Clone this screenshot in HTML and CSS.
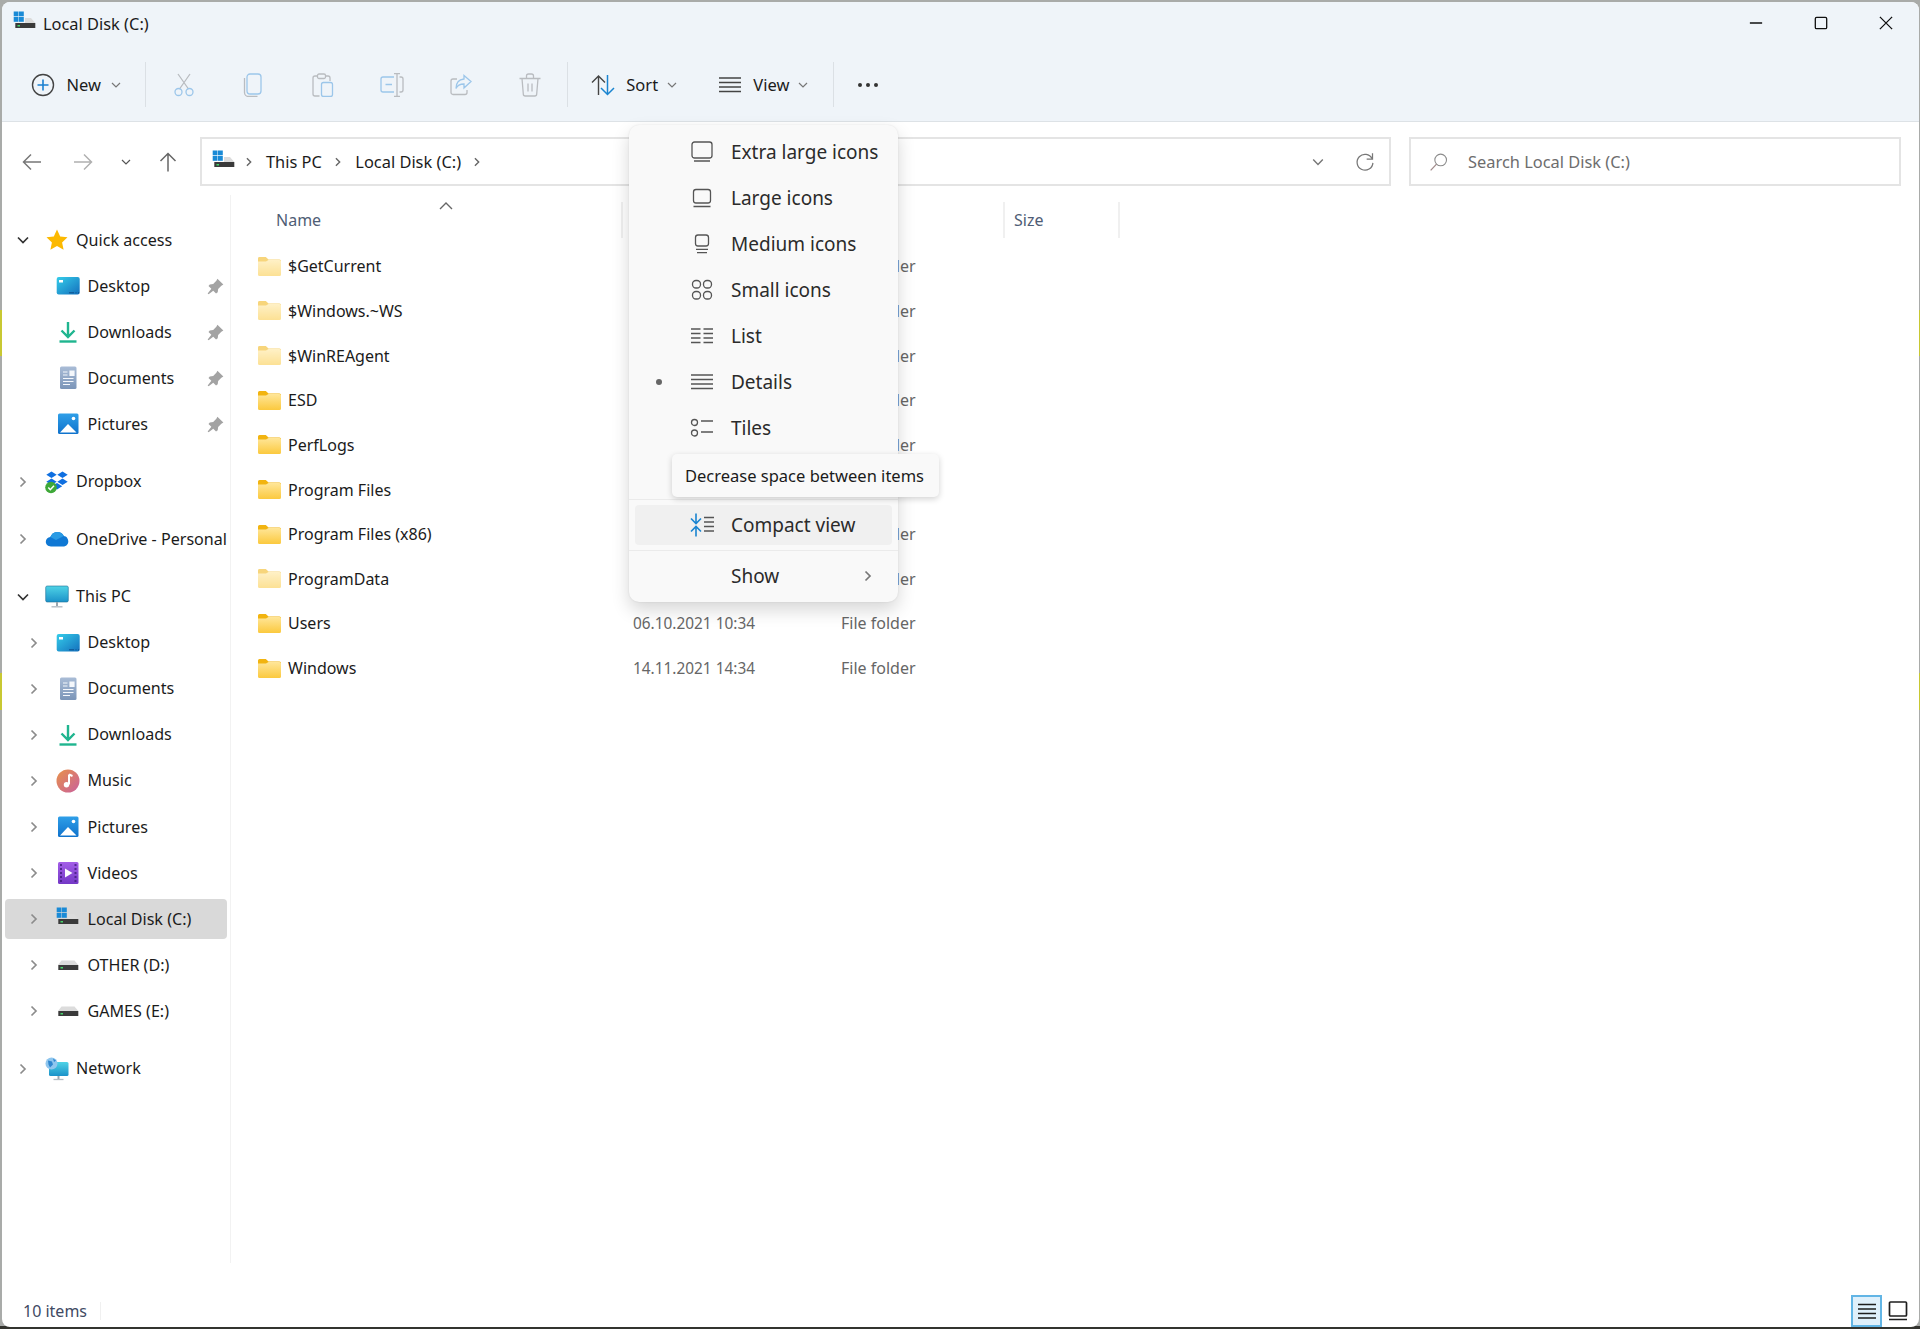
FILE: index.html
```html
<!DOCTYPE html>
<html lang="en">
<head>
  <meta charset="UTF-8">
  <title>Local Disk (C:)</title>
  <link rel="stylesheet" href="styles.css">
</head>
<body>
  <svg class="sprite" xmlns="http://www.w3.org/2000/svg">
    <defs>
      <linearGradient id="g-desk" x1="0" y1="0" x2="1" y2="1"><stop offset="0" stop-color="#35cdea"/><stop offset="1" stop-color="#1470bd"/></linearGradient>
      <linearGradient id="g-doc" x1="0" y1="0" x2="0" y2="1"><stop offset="0" stop-color="#a9bcd6"/><stop offset="1" stop-color="#7b95b8"/></linearGradient>
      <linearGradient id="g-pic" x1="0" y1="0" x2="0" y2="1"><stop offset="0" stop-color="#2f9fe8"/><stop offset="1" stop-color="#0f72cc"/></linearGradient>
      <linearGradient id="g-music" x1="0" y1="0" x2="1" y2="1"><stop offset="0" stop-color="#e8924a"/><stop offset="1" stop-color="#c9609c"/></linearGradient>
      <linearGradient id="g-video" x1="0" y1="0" x2="0" y2="1"><stop offset="0" stop-color="#a35ee8"/><stop offset="1" stop-color="#7438c6"/></linearGradient>
      <linearGradient id="g-mon" x1="0" y1="0" x2="0" y2="1"><stop offset="0" stop-color="#4fd3e6"/><stop offset="1" stop-color="#1b92c9"/></linearGradient>
      <linearGradient id="g-folder" x1="0" y1="0" x2="0" y2="1"><stop offset="0" stop-color="#ffe699"/><stop offset="1" stop-color="#fbc93e"/></linearGradient>
    </defs>
    <symbol id="i-chev-r" viewBox="0 0 12 12"><path d="M3.5 1.500 8 6l-4.500 4.500" fill="none" stroke="currentColor" stroke-width="1.700"/></symbol>
    <symbol id="i-chev-d" viewBox="0 0 12 12"><path d="M1 3.500 6 8.500l5-5" fill="none" stroke="currentColor" stroke-width="1.700"/></symbol>
    <symbol id="i-chev-s" viewBox="0 0 10 10"><path d="M1 3l4 4 4-4" fill="none" stroke="currentColor" stroke-width="1.200"/></symbol>
    <symbol id="i-star" viewBox="0 0 24 24"><path d="M12 1.500l3.200 6.900 7.300.9-5.400 5.100 1.500 7.400L12 18.100l-6.600 3.700 1.500-7.400L1.500 9.300l7.300-.9z" fill="#fcb900"/></symbol>
    <symbol id="i-desktop" viewBox="0 0 24 24"><rect x=".7" y="3" width="23" height="17.500" rx="2" fill="url(#g-desk)"/><rect x="3" y="6" width="4" height="2.500" fill="#fff"/><path d="M13 18.800h5M19.500 18.800h1M22 18.800h1" stroke="#0d4f8c" stroke-width="1"/></symbol>
    <symbol id="i-down" viewBox="0 0 24 24"><path d="M12 2v15M5.500 10.500 12 17l6.500-6.500" fill="none" stroke="#1fb58f" stroke-width="2.400"/><path d="M3.500 21.500h17" stroke="#1fb58f" stroke-width="2.400"/></symbol>
    <symbol id="i-doc" viewBox="0 0 24 24"><rect x="4" y=".5" width="16.500" height="22.500" rx="1.500" fill="url(#g-doc)"/><path d="M7 6h4.500M7 9h4.500M14 5h4v4.500h-4z M7 12.500h10.500M7 15.500h10.500M7 18.500h7" stroke="#f4f7fb" stroke-width="1.200" fill="#f4f7fb"/></symbol>
    <symbol id="i-pic" viewBox="0 0 24 24"><rect x="2" y="1.500" width="20.500" height="20.500" rx="1.500" fill="url(#g-pic)"/><circle cx="17.500" cy="6.500" r="1.800" fill="#fff"/><path d="M4 20.500l8-8.500 8.500 8.500z" fill="#fff"/></symbol>
    <symbol id="i-pin" viewBox="0 0 16 16"><path d="M9.800.6 15.400 6.200l-1.900 1.100-3 3-.4 3.200-1.600 1.200-2.600-2.800L1.500 15.400.6 14.500l3.500-4.300L1.400 7.500l1.200-1.500 3.200-.4 3-3z" fill="#a3a3a3"/></symbol>
    <symbol id="i-music" viewBox="0 0 24 24"><circle cx="12" cy="12" r="11.500" fill="url(#g-music)"/><path d="M13 5.500v10" stroke="#fff" stroke-width="2"/><path d="M13 5.500l3.500 1.500" stroke="#fff" stroke-width="2"/><circle cx="10.500" cy="15.700" r="2.700" fill="#fff"/></symbol>
    <symbol id="i-video" viewBox="0 0 24 24"><rect x="2" y="1" width="20.500" height="22" rx="1.500" fill="url(#g-video)"/><path d="M9 7.500v9l7.500-4.500z" fill="#fff"/><path d="M4 4h2M4 8h2M4 12h2M4 16h2M4 20h2M18.500 4h2M18.500 8h2M18.500 12h2M18.500 16h2M18.500 20h2" stroke="#3d1a78" stroke-width="1.600"/></symbol>
    <symbol id="i-drive-c" viewBox="0 0 24 24"><g fill="#1a8ad6"><rect x=".7" y=".5" width="4.800" height="4.800"/><rect x="6" y=".5" width="4.800" height="4.800"/><rect x=".7" y="6" width="4.800" height="4.800"/><rect x="6" y="6" width="4.800" height="4.800"/></g><path d="M12 7h6l4.300 5H12z" fill="#dcdcdc"/><rect x="2.300" y="12" width="20" height="5" fill="#3a3a3a"/><rect x="4.500" y="14" width="2.500" height="1.500" fill="#45d66a"/></symbol>
    <symbol id="i-drive" viewBox="0 0 24 24"><path d="M5.500 7.500h13l3.800 4.500H2z" fill="#dcdcdc"/><rect x="2.300" y="12" width="20" height="5" fill="#3a3a3a"/><rect x="4.500" y="14" width="2.500" height="1.500" fill="#45d66a"/></symbol>
    <symbol id="i-dropbox" viewBox="0 0 24 24"><g fill="#0f6fe0"><path d="M6.500 1.500l5.200 3.300-5.200 3.300L1.300 4.800z"/><path d="M17.500 1.500l5.200 3.300-5.200 3.300-5.200-3.300z"/><path d="M6.500 8.500l5.200 3.300-5.200 3.300-5.200-3.300z"/><path d="M17.500 8.500l5.200 3.300-5.200 3.300-5.200-3.300z"/><path d="M12 13l5.200 3.300L12 19.600l-5.200-3.300z"/></g><circle cx="6" cy="17.500" r="5.800" fill="#3ea838"/><path d="M3.300 17.500l2 2.200 3.700-4" fill="none" stroke="#fff" stroke-width="1.500"/></symbol>
    <symbol id="i-cloud" viewBox="0 0 24 24"><path d="M6 19.500C3 19.500.8 17.400.8 14.800c0-2.500 2-4.600 4.500-4.700C6.500 6.900 9.300 5 12.500 5c2.800 0 5.200 1.500 6.300 3.900 2.800.2 4.500 2.800 4.500 5.600 0 2.800-2.200 5-5 5z" fill="#0f78d4"/><path d="M5.300 10.100C6.500 6.900 9.300 5 12.500 5c2.800 0 5.200 1.500 6.300 3.900L11 13z" fill="#2a9be4"/></symbol>
    <symbol id="i-pc" viewBox="0 0 24 24"><rect x=".7" y="1" width="22.600" height="16" rx="1.500" fill="url(#g-mon)" stroke="#1c6f96" stroke-width=".6"/><path d="M12 17v4" stroke="#9aa6ae" stroke-width="2"/><path d="M6.500 21.800h11" stroke="#b4bdc4" stroke-width="1.400"/></symbol>
    <symbol id="i-net" viewBox="0 0 24 24"><rect x="4" y="5" width="19.500" height="14" rx="1.500" fill="url(#g-mon)"/><path d="M13.500 19v3" stroke="#9aa6ae" stroke-width="2"/><path d="M8.500 22.500h10" stroke="#b4bdc4" stroke-width="1.300"/><circle cx="6.500" cy="6.500" r="6" fill="#8fc6ee"/><path d="M3 3.500l4 1 1 3-3 3-1.500-3zM8 1.500l3 2-2 1.500z" fill="#2f86cf"/></symbol>
    <symbol id="i-folder" viewBox="0 0 23 19"><path d="M1.500 0h6.300l2.700 2.500h11a1.500 1.500 0 0 1 1.500 1.500v5H0V1.500A1.500 1.500 0 0 1 1.500 0z" fill="#f2b410"/><path d="M0 4.500h8l2.500-1.500H21.500A1.500 1.500 0 0 1 23 4.500v13a1.500 1.500 0 0 1-1.500 1.500h-20A1.500 1.500 0 0 1 0 17.500z" fill="url(#g-folder)"/></symbol>
    <symbol id="i-m-xl" viewBox="0 0 24 24"><rect x="2" y="2" width="20" height="16" rx="2.500" fill="none" stroke="currentColor" stroke-width="1.300"/><path d="M4 21h16" stroke="currentColor" stroke-width="1.300"/></symbol>
    <symbol id="i-m-l" viewBox="0 0 24 24"><rect x="3.500" y="3.500" width="17" height="13.500" rx="2.500" fill="none" stroke="currentColor" stroke-width="1.300"/><path d="M3.500 20.500h17" stroke="currentColor" stroke-width="1.300"/></symbol>
    <symbol id="i-m-m" viewBox="0 0 24 24"><rect x="5.500" y="3" width="13" height="11" rx="2.500" fill="none" stroke="currentColor" stroke-width="1.300"/><path d="M6 17.300h12M7 20.700h10" stroke="currentColor" stroke-width="1.300"/></symbol>
    <symbol id="i-m-s" viewBox="0 0 24 24"><g fill="none" stroke="currentColor" stroke-width="1.300"><rect x="2.500" y="2.500" width="8" height="7.500" rx="3.500"/><rect x="13.500" y="2.500" width="8" height="7.500" rx="3.500"/><rect x="2.500" y="13.500" width="8" height="7.500" rx="3.500"/><rect x="13.500" y="13.500" width="8" height="7.500" rx="3.500"/></g></symbol>
    <symbol id="i-m-list" viewBox="0 0 24 24"><path d="M1 5h9.500M1 9.500h9.500M1 14h9.500M1 18.500h9.500M13.500 5H23M13.500 9.500H23M13.500 14H23M13.500 18.500H23" stroke="currentColor" stroke-width="1.300"/></symbol>
    <symbol id="i-m-det" viewBox="0 0 24 24"><path d="M1 5h22M1 9.500h22M1 14h22M1 18.500h22" stroke="currentColor" stroke-width="1.300"/></symbol>
    <symbol id="i-m-tile" viewBox="0 0 24 24"><g fill="none" stroke="currentColor" stroke-width="1.300"><rect x="1.500" y="3.500" width="6" height="6" rx="3"/><rect x="1.500" y="14" width="6" height="6" rx="3"/><path d="M11 5h12M11 16h12"/></g></symbol>
    <symbol id="i-m-comp" viewBox="0 0 24 24"><g fill="none" stroke="#1a84d0" stroke-width="1.600"><path d="M6 .5v10M1 5.500l5 5 5-5M6 23.500v-10M1 18.500l5-5 5 5"/></g><path d="M14 4.500h10M14 9h10M14 13.500h10M14 18h10" stroke="currentColor" stroke-width="1.300"/></symbol>
    <symbol id="i-t-det" viewBox="0 0 20 20"><path d="M1 3.500h18M1 8h18M1 12.500h18M1 17h18" stroke="#1e1e1e" stroke-width="1.700"/></symbol>
    <symbol id="i-t-tile" viewBox="0 0 20 20"><rect x="1.500" y="1" width="17" height="14" rx="1" fill="none" stroke="#1e1e1e" stroke-width="1.700"/><path d="M1 18.500h18" stroke="#1e1e1e" stroke-width="1.700"/></symbol>
    <symbol id="i-cut" viewBox="0 0 24 24"><g fill="none" stroke-width="1.300"><path d="M6 1l10.500 15M18 1 7.500 16" stroke="#b9bcc0"/><circle cx="6.500" cy="19" r="3.500" stroke="#9cc6ea"/><circle cx="17.500" cy="19" r="3.500" stroke="#9cc6ea"/></g></symbol>
    <symbol id="i-copy" viewBox="0 0 24 24"><g fill="none" stroke-width="1.300"><rect x="6" y="1" width="14" height="20" rx="3" stroke="#9cc6ea"/><path d="M3.500 5v14.500a4 4 0 0 0 4 4h9" stroke="#b9bcc0"/></g></symbol>
    <symbol id="i-paste" viewBox="0 0 24 24"><g fill="none" stroke-width="1.300"><path d="M9.500 23H5a2 2 0 0 1-2-2V5a2 2 0 0 1 2-2h2.500M15.500 3H18a2 2 0 0 1 2 2v3" stroke="#b9bcc0"/><rect x="7.500" y="1" width="8" height="4.500" rx="1.500" stroke="#b9bcc0"/><rect x="11.500" y="9.500" width="11" height="14" rx="2" stroke="#9cc6ea"/></g></symbol>
    <symbol id="i-rename" viewBox="0 0 24 24"><g fill="none" stroke-width="1.300"><path d="M14 4H3a2 2 0 0 0-2 2v11a2 2 0 0 0 2 2h11" stroke="#9cc6ea"/><path d="M5.500 11.500H12" stroke="#9cc6ea"/><path d="M17 0.500v23M14 0.500h6M14 23.500h6M19.500 4h1.500a2 2 0 0 1 2 2v11a2 2 0 0 1-2 2h-1.500" stroke="#b9bcc0"/></g></symbol>
    <symbol id="i-share" viewBox="0 0 24 24"><g fill="none" stroke-width="1.300"><path d="M18 17v2.500a2 2 0 0 1-2 2H4a2 2 0 0 1-2-2V8a2 2 0 0 1 2-2h4" stroke="#b9bcc0"/><path d="M15 2.500l7 6-7 6.500v-4C11 11 8.500 12 7 15.500 7 10 10 6.500 15 6z" stroke="#9cc6ea"/></g></symbol>
    <symbol id="i-del" viewBox="0 0 24 24"><g fill="none" stroke="#b9bcc0" stroke-width="1.300"><path d="M1.500 5.500h21M8.500 5.500V3a2 2 0 0 1 2-2h3a2 2 0 0 1 2 2v2.500M4 5.500l1.300 15.500a2 2 0 0 0 2 2h9.400a2 2 0 0 0 2-2L20 5.500M10 10.500v8M14 10.500v8"/></g></symbol>
    <symbol id="i-new" viewBox="0 0 24 24"><circle cx="12" cy="12" r="10.500" fill="none" stroke="#444" stroke-width="1.400"/><path d="M12 6.500v11M6.500 12h11" stroke="#1a7fd0" stroke-width="1.600"/></symbol>
    <symbol id="i-sort" viewBox="0 0 24 24"><path d="M7.500 22V3M1 9.500 7.500 3 14 9.500" fill="none" stroke="#444" stroke-width="1.400"/><path d="M16.500 2v19.500M10 15l6.500 6.500L23 15" fill="none" stroke="#1a84d0" stroke-width="1.500"/></symbol>
    <symbol id="i-arrow-l" viewBox="0 0 24 24"><path d="M21 12H3.500M11 4.500 3.500 12l7.500 7.500" fill="none" stroke="currentColor" stroke-width="1.500"/></symbol>
    <symbol id="i-arrow-r" viewBox="0 0 24 24"><path d="M3 12h17.500M13 4.500l7.500 7.500-7.500 7.500" fill="none" stroke="currentColor" stroke-width="1.500"/></symbol>
    <symbol id="i-arrow-u" viewBox="0 0 24 24"><path d="M12 21.500V3.500M4.500 11 12 3.500l7.500 7.500" fill="none" stroke="currentColor" stroke-width="1.500"/></symbol>
    <symbol id="i-refresh" viewBox="0 0 24 24"><path d="M20.500 8A9.500 9.500 0 1 0 21.500 13" fill="none" stroke="#777" stroke-width="1.500"/><path d="M21 1.500V8.500H14" fill="none" stroke="#777" stroke-width="1.500"/></symbol>
    <symbol id="i-search" viewBox="0 0 24 24"><circle cx="14" cy="9.500" r="7" fill="none" stroke="#8c8c8c" stroke-width="1.300"/><path d="M9 14.500 2 22" stroke="#a08a8a" stroke-width="1.500"/></symbol>
  </svg>

  <div class="window">
    <div class="titlebar">
      <svg class="title-icon"><use href="#i-drive-c"/></svg>
      <span class="title-text">Local Disk (C:)</span>
      <div class="win-controls">
        <svg class="win-btn" viewBox="0 0 16 16"><path d="M1 8h14" stroke="#111" stroke-width="1.500"/></svg>
        <svg class="win-btn" viewBox="0 0 16 16"><rect x="1.500" y="1.500" width="13" height="13" rx="1.500" fill="none" stroke="#111" stroke-width="1.500"/></svg>
        <svg class="win-btn" viewBox="0 0 16 16"><path d="M1 1l14 14M15 1 1 15" stroke="#111" stroke-width="1.500"/></svg>
      </div>
    </div>

    <div class="toolbar">
      <div class="tool-btn tool-new">
        <svg class="ic24"><use href="#i-new"/></svg>
        <span>New</span>
        <svg class="chev-s"><use href="#i-chev-s"/></svg>
      </div>
      <div class="tool-sep sep-first"></div>
      <div class="tool-icon"><svg class="ic24"><use href="#i-cut"/></svg></div>
      <div class="tool-icon"><svg class="ic24"><use href="#i-copy"/></svg></div>
      <div class="tool-icon"><svg class="ic24"><use href="#i-paste"/></svg></div>
      <div class="tool-icon"><svg class="ic24"><use href="#i-rename"/></svg></div>
      <div class="tool-icon"><svg class="ic24"><use href="#i-share"/></svg></div>
      <div class="tool-icon"><svg class="ic24"><use href="#i-del"/></svg></div>
      <div class="tool-sep sep-second"></div>
      <div class="tool-btn tool-sort">
        <svg class="ic24"><use href="#i-sort"/></svg>
        <span>Sort</span>
        <svg class="chev-s"><use href="#i-chev-s"/></svg>
      </div>
      <div class="tool-btn tool-view">
        <svg class="ic24 dark"><use href="#i-m-det"/></svg>
        <span>View</span>
        <svg class="chev-s"><use href="#i-chev-s"/></svg>
      </div>
      <div class="tool-sep sep-third"></div>
      <div class="tool-more"><i></i><i></i><i></i></div>
    </div>

    <div class="nav">
      <svg class="nav-btn nav-back"><use href="#i-arrow-l"/></svg>
      <svg class="nav-btn nav-fwd"><use href="#i-arrow-r"/></svg>
      <svg class="nav-hist"><use href="#i-chev-s"/></svg>
      <svg class="nav-btn nav-up"><use href="#i-arrow-u"/></svg>
      <div class="address">
        <svg class="ic24"><use href="#i-drive-c"/></svg>
        <svg class="crumb-chev"><use href="#i-chev-r"/></svg>
        <span>This PC</span>
        <svg class="crumb-chev"><use href="#i-chev-r"/></svg>
        <span>Local Disk (C:)</span>
        <svg class="crumb-chev"><use href="#i-chev-r"/></svg>
        <svg class="addr-drop"><use href="#i-chev-s"/></svg>
        <svg class="addr-refresh"><use href="#i-refresh"/></svg>
      </div>
      <div class="search">
        <svg class="ic24"><use href="#i-search"/></svg>
        <span>Search Local Disk (C:)</span>
      </div>
    </div>

    <div class="body">
      <aside class="sidebar">
        <div class="group">
          <div class="row"><svg class="chev open"><use href="#i-chev-d"/></svg><svg class="ic24"><use href="#i-star"/></svg><span>Quick access</span></div>
          <div class="row sub"><span class="chev"></span><svg class="ic24"><use href="#i-desktop"/></svg><span>Desktop</span><svg class="pin"><use href="#i-pin"/></svg></div>
          <div class="row sub"><span class="chev"></span><svg class="ic24"><use href="#i-down"/></svg><span>Downloads</span><svg class="pin"><use href="#i-pin"/></svg></div>
          <div class="row sub"><span class="chev"></span><svg class="ic24"><use href="#i-doc"/></svg><span>Documents</span><svg class="pin"><use href="#i-pin"/></svg></div>
          <div class="row sub"><span class="chev"></span><svg class="ic24"><use href="#i-pic"/></svg><span>Pictures</span><svg class="pin"><use href="#i-pin"/></svg></div>
        </div>
        <div class="group">
          <div class="row"><svg class="chev"><use href="#i-chev-r"/></svg><svg class="ic24"><use href="#i-dropbox"/></svg><span>Dropbox</span></div>
        </div>
        <div class="group">
          <div class="row"><svg class="chev"><use href="#i-chev-r"/></svg><svg class="ic24"><use href="#i-cloud"/></svg><span>OneDrive - Personal</span></div>
        </div>
        <div class="group">
          <div class="row"><svg class="chev open"><use href="#i-chev-d"/></svg><svg class="ic24"><use href="#i-pc"/></svg><span>This PC</span></div>
          <div class="row sub"><svg class="chev"><use href="#i-chev-r"/></svg><svg class="ic24"><use href="#i-desktop"/></svg><span>Desktop</span></div>
          <div class="row sub"><svg class="chev"><use href="#i-chev-r"/></svg><svg class="ic24"><use href="#i-doc"/></svg><span>Documents</span></div>
          <div class="row sub"><svg class="chev"><use href="#i-chev-r"/></svg><svg class="ic24"><use href="#i-down"/></svg><span>Downloads</span></div>
          <div class="row sub"><svg class="chev"><use href="#i-chev-r"/></svg><svg class="ic24"><use href="#i-music"/></svg><span>Music</span></div>
          <div class="row sub"><svg class="chev"><use href="#i-chev-r"/></svg><svg class="ic24"><use href="#i-pic"/></svg><span>Pictures</span></div>
          <div class="row sub"><svg class="chev"><use href="#i-chev-r"/></svg><svg class="ic24"><use href="#i-video"/></svg><span>Videos</span></div>
          <div class="row sub selected"><svg class="chev"><use href="#i-chev-r"/></svg><svg class="ic24"><use href="#i-drive-c"/></svg><span>Local Disk (C:)</span></div>
          <div class="row sub"><svg class="chev"><use href="#i-chev-r"/></svg><svg class="ic24"><use href="#i-drive"/></svg><span>OTHER (D:)</span></div>
          <div class="row sub"><svg class="chev"><use href="#i-chev-r"/></svg><svg class="ic24"><use href="#i-drive"/></svg><span>GAMES (E:)</span></div>
        </div>
        <div class="group">
          <div class="row"><svg class="chev"><use href="#i-chev-r"/></svg><svg class="ic24"><use href="#i-net"/></svg><span>Network</span></div>
        </div>
      </aside>

      <main class="files">
        <div class="head">
          <div class="col col-name">Name<svg class="sort-caret" viewBox="0 0 14 8"><path d="M1 7l6-6 6 6" fill="none" stroke="#666" stroke-width="1.400"/></svg></div>
          <div class="col"></div>
          <div class="col"></div>
          <div class="col col-size">Size</div>
        </div>
        <div class="file hidden-file"><div class="file-name"><svg class="folder"><use href="#i-folder"/></svg><span>$GetCurrent</span></div><div class="cell"></div><div class="cell">File folder</div></div>
        <div class="file hidden-file"><div class="file-name"><svg class="folder"><use href="#i-folder"/></svg><span>$Windows.~WS</span></div><div class="cell"></div><div class="cell">File folder</div></div>
        <div class="file hidden-file"><div class="file-name"><svg class="folder"><use href="#i-folder"/></svg><span>$WinREAgent</span></div><div class="cell"></div><div class="cell">File folder</div></div>
        <div class="file"><div class="file-name"><svg class="folder"><use href="#i-folder"/></svg><span>ESD</span></div><div class="cell"></div><div class="cell">File folder</div></div>
        <div class="file"><div class="file-name"><svg class="folder"><use href="#i-folder"/></svg><span>PerfLogs</span></div><div class="cell"></div><div class="cell">File folder</div></div>
        <div class="file"><div class="file-name"><svg class="folder"><use href="#i-folder"/></svg><span>Program Files</span></div><div class="cell"></div><div class="cell">File folder</div></div>
        <div class="file"><div class="file-name"><svg class="folder"><use href="#i-folder"/></svg><span>Program Files (x86)</span></div><div class="cell"></div><div class="cell">File folder</div></div>
        <div class="file hidden-file"><div class="file-name"><svg class="folder"><use href="#i-folder"/></svg><span>ProgramData</span></div><div class="cell"></div><div class="cell">File folder</div></div>
        <div class="file"><div class="file-name"><svg class="folder"><use href="#i-folder"/></svg><span>Users</span></div><div class="cell date">06.10.2021 10:34</div><div class="cell">File folder</div></div>
        <div class="file"><div class="file-name"><svg class="folder"><use href="#i-folder"/></svg><span>Windows</span></div><div class="cell date">14.11.2021 14:34</div><div class="cell">File folder</div></div>
      </main>
    </div>

    <div class="status">
      <span class="status-count">10 items</span>
      <div class="status-sep"></div>
      <div class="view-toggle active"><svg class="ic-toggle"><use href="#i-t-det"/></svg></div>
      <div class="view-toggle"><svg class="ic-toggle"><use href="#i-t-tile"/></svg></div>
    </div>

    <div class="menu">
      <div class="menu-item"><i></i><svg class="ic24"><use href="#i-m-xl"/></svg><span>Extra large icons</span></div>
      <div class="menu-item"><i></i><svg class="ic24"><use href="#i-m-l"/></svg><span>Large icons</span></div>
      <div class="menu-item"><i></i><svg class="ic24"><use href="#i-m-m"/></svg><span>Medium icons</span></div>
      <div class="menu-item"><i></i><svg class="ic24"><use href="#i-m-s"/></svg><span>Small icons</span></div>
      <div class="menu-item"><i></i><svg class="ic24"><use href="#i-m-list"/></svg><span>List</span></div>
      <div class="menu-item"><i class="dot"></i><svg class="ic24"><use href="#i-m-det"/></svg><span>Details</span></div>
      <div class="menu-item"><i></i><svg class="ic24"><use href="#i-m-tile"/></svg><span>Tiles</span></div>
      <div class="menu-item"></div>
      <div class="menu-sep"></div>
      <div class="menu-item hover"><i></i><svg class="ic24"><use href="#i-m-comp"/></svg><span>Compact view</span></div>
      <div class="menu-sep"></div>
      <div class="menu-item"><i></i><b></b><span>Show</span><svg class="menu-chev"><use href="#i-chev-r"/></svg></div>
    </div>
    <div class="tooltip">Decrease space between items</div>
  </div>
</body>
</html>
```

FILE: styles.css
```css
* {
  box-sizing: border-box;
}
html, body {
  height: 100%;
}
body {
  margin: 0;
  padding: 2px 1px 2px 2px;
  overflow: hidden;
  background: linear-gradient(#a9aba9 0 310px, #c8c832 310px 356px, #a9aba9 356px 673px, #c8c832 673px 710px, #a9aba9 710px 1326px, #33342f 1326px);
  font-family: "Noto Sans", "Open Sans", sans-serif;
  font-size: 17px;
  color: #1b1b1b;
}
svg {
  flex: none;
}
.sprite {
  position: absolute;
  width: 0;
  height: 0;
}
.ic24 {
  width: 24px;
  height: 24px;
}
.window {
  position: relative;
  display: flex;
  flex-direction: column;
  height: 100%;
  background: #fff;
  border-radius: 8px;
  overflow: hidden;
}

/* title bar */
.titlebar {
  display: flex;
  align-items: center;
  height: 42px;
  padding-left: 11px;
  background: #eff4f9;
}
.title-icon {
  width: 24px;
  height: 24px;
}
.title-text {
  margin-left: 6px;
  font-size: 16.400px;
}
.win-controls {
  display: flex;
  margin-left: auto;
  margin-right: 26px;
  gap: 51px;
}
.win-btn {
  width: 14px;
  height: 14px;
}

/* toolbar */
.toolbar {
  display: flex;
  align-items: center;
  height: 78px;
  padding: 4px 0 0 29px;
  background: #eff4f9;
  border-bottom: 1px solid #dde2e6;
}
.tool-btn {
  display: flex;
  align-items: center;
}
.tool-btn span {
  margin-left: 11.500px;
  font-size: 16.500px;
}
.chev-s {
  width: 10px;
  height: 10px;
  margin-left: auto;
  color: #777;
}
.tool-new {
  width: 90px;
}
.tool-sort {
  width: 86px;
  margin-left: 23px;
}
.tool-view {
  width: 90px;
  margin-left: 41px;
}
.dark {
  color: #444;
}
.tool-sep {
  width: 1px;
  height: 45px;
  background: #dbe0e5;
}
.sep-first {
  margin-left: 24px;
  margin-right: 3px;
}
.sep-second {
  margin-left: 2px;
}
.sep-third {
  margin-left: 25px;
}
.tool-icon {
  display: flex;
  justify-content: center;
  width: 69.300px;
}
.tool-more {
  display: flex;
  gap: 4px;
  margin-left: 24px;
}
.tool-more i {
  width: 4px;
  height: 4px;
  border-radius: 50%;
  background: #333;
}

/* address row */
.nav {
  display: flex;
  align-items: flex-start;
  height: 64px;
  padding: 15px 0 0 7px;
}
.nav > svg {
  align-self: flex-start;
  margin-top: 13px;
}
.nav-btn {
  width: 24px;
  height: 24px;
}
.nav-back {
  margin-left: 11px;
  color: #777;
}
.nav-fwd {
  margin-left: 27px;
  color: #b0b0b0;
}
.nav-hist {
  width: 10px;
  height: 10px;
  margin-left: 26px;
  margin-top: 20px !important;
  color: #555;
}
.nav-up {
  margin-left: 25px;
  color: #666;
}
.address, .search {
  display: flex;
  align-items: center;
  height: 49px;
  border: 2px solid #e4e4e4;
  background: #fff;
}
.address {
  width: 1191px;
  margin-left: 20px;
  padding-left: 10px;
}
.address span {
  font-size: 16.400px;
}
.crumb-chev {
  width: 10px;
  height: 10px;
  margin: 0 12.500px 0 11px;
  color: #666;
}
.address > .ic24 {
  margin-right: -3.500px;
}
.addr-drop {
  width: 12px;
  height: 12px;
  margin-left: auto;
  color: #777;
}
.addr-refresh {
  width: 20px;
  height: 20px;
  margin-left: 31px;
  margin-right: 14px;
}
.search {
  width: 492px;
  margin-left: 18px;
  padding-left: 18px;
  font-size: 16.400px;
  color: #6d6d6d;
}
.search .ic24 {
  width: 20px;
  height: 20px;
  margin-right: 19px;
}

/* body */
.body {
  display: flex;
  flex: 1;
  min-height: 0;
}
.sidebar {
  display: flex;
  flex-direction: column;
  gap: 17.400px;
  width: 229px;
  margin: 9px 0 32px;
  padding: 25px 0 0 3px;
  border-right: 1px solid #f2f2f2;
}
.group {
  display: flex;
  flex-direction: column;
  gap: 6.100px;
}
.row {
  display: flex;
  align-items: center;
  width: 222px;
  height: 40px;
  padding-left: 12px;
  border-radius: 4px;
  white-space: nowrap;
  font-size: 16.100px;
}
.row.sub {
  padding-left: 23px;
}
.row.selected {
  background: #d9d9d9;
}
.chev {
  width: 12px;
  height: 12px;
  margin-right: 16px;
  color: #8c8c8c;
}
.chev.open {
  color: #333;
}
.row .ic24 + span {
  margin: -1px 0 0 7px;
}
.row.sub .ic24 + span {
  margin-left: 7.500px;
}
.pin {
  width: 17px;
  height: 17px;
  margin-left: auto;
  margin-right: 3px;
}

/* file list */
.files {
  flex: 1;
  padding-top: 16px;
}
.head, .file {
  display: grid;
}
.head {
  grid-template-columns: 392px 210px 172px 115px;
  height: 36px;
  margin-bottom: 6px;
  color: #4f5d75;
  font-size: 16px;
}
.col {
  display: flex;
  align-items: center;
  padding-left: 10px;
  border-right: 2px solid #f0f0f0;
}
.col-name {
  position: relative;
  padding-left: 45px;
}
.col-size {
  padding-left: 9px;
}
.sort-caret {
  position: absolute;
  left: 208px;
  top: 0;
  width: 14px;
  height: 8px;
}
.file {
  grid-template-columns: 393px 208px 172px 115px;
  align-items: center;
  height: 44.650px;
  font-size: 16px;
}
.file-name {
  display: flex;
  align-items: center;
  padding-left: 27px;
}
.folder {
  width: 23px;
  height: 19px;
  margin-right: 7px;
}
.hidden-file .folder {
  opacity: .55;
}
.cell {
  padding-left: 9px;
  color: #666;
}
.date {
  font-size: 15.400px;
}

/* status bar */
.status {
  display: flex;
  align-items: center;
  height: 32px;
  padding-left: 21px;
  font-size: 16px;
  color: #414a63;
}
.status-count {
  width: 77px;
}
.status-sep {
  width: 1px;
  height: 18px;
  background: #f0f0f0;
}
.view-toggle {
  display: flex;
  align-items: center;
  justify-content: center;
  width: 31px;
  height: 32px;
  margin-right: 6px;
}
.view-toggle.active {
  margin-left: auto;
  margin-right: 0;
  background: #dff0fb;
  border: 2px solid #62b5e5;
}
.ic-toggle {
  width: 20px;
  height: 20px;
}

/* view menu and its tooltip */
.menu {
  position: absolute;
  left: 627px;
  top: 123px;
  display: flex;
  flex-direction: column;
  gap: 6px;
  width: 269px;
  padding: 7px 6px 6px;
  background: #f9f9f9;
  border-radius: 10px;
  box-shadow: 0 8px 18px rgba(0, 0, 0, .16), 0 0 2px rgba(0, 0, 0, .1);
  font-size: 19px;
  color: #2b2b2b;
}
.menu-item {
  display: grid;
  grid-template-columns: 55px 24px 1fr auto;
  align-items: center;
  height: 40px;
  border-radius: 4px;
}
.menu-item > .ic24 {
  color: #555;
}
.menu-item span {
  padding-left: 17px;
}
.menu-item.hover {
  background: #f0f0f0;
}
.dot {
  width: 6px;
  height: 6px;
  margin-left: 21px;
  border-radius: 50%;
  background: #666;
}
.menu-sep {
  height: 1px;
  margin: -1px -6px;
  background: #ebebeb;
}
.menu-chev {
  width: 12px;
  height: 12px;
  margin-right: 18px;
  color: #777;
}
.tooltip {
  position: absolute;
  left: 670px;
  top: 452px;
  width: 267px;
  height: 43px;
  padding: 0 13px;
  line-height: 43px;
  background: #f9f9f9;
  border-radius: 5px;
  box-shadow: 0 2px 6px rgba(0, 0, 0, .18);
  font-size: 16.500px;
  white-space: nowrap;
}
```
